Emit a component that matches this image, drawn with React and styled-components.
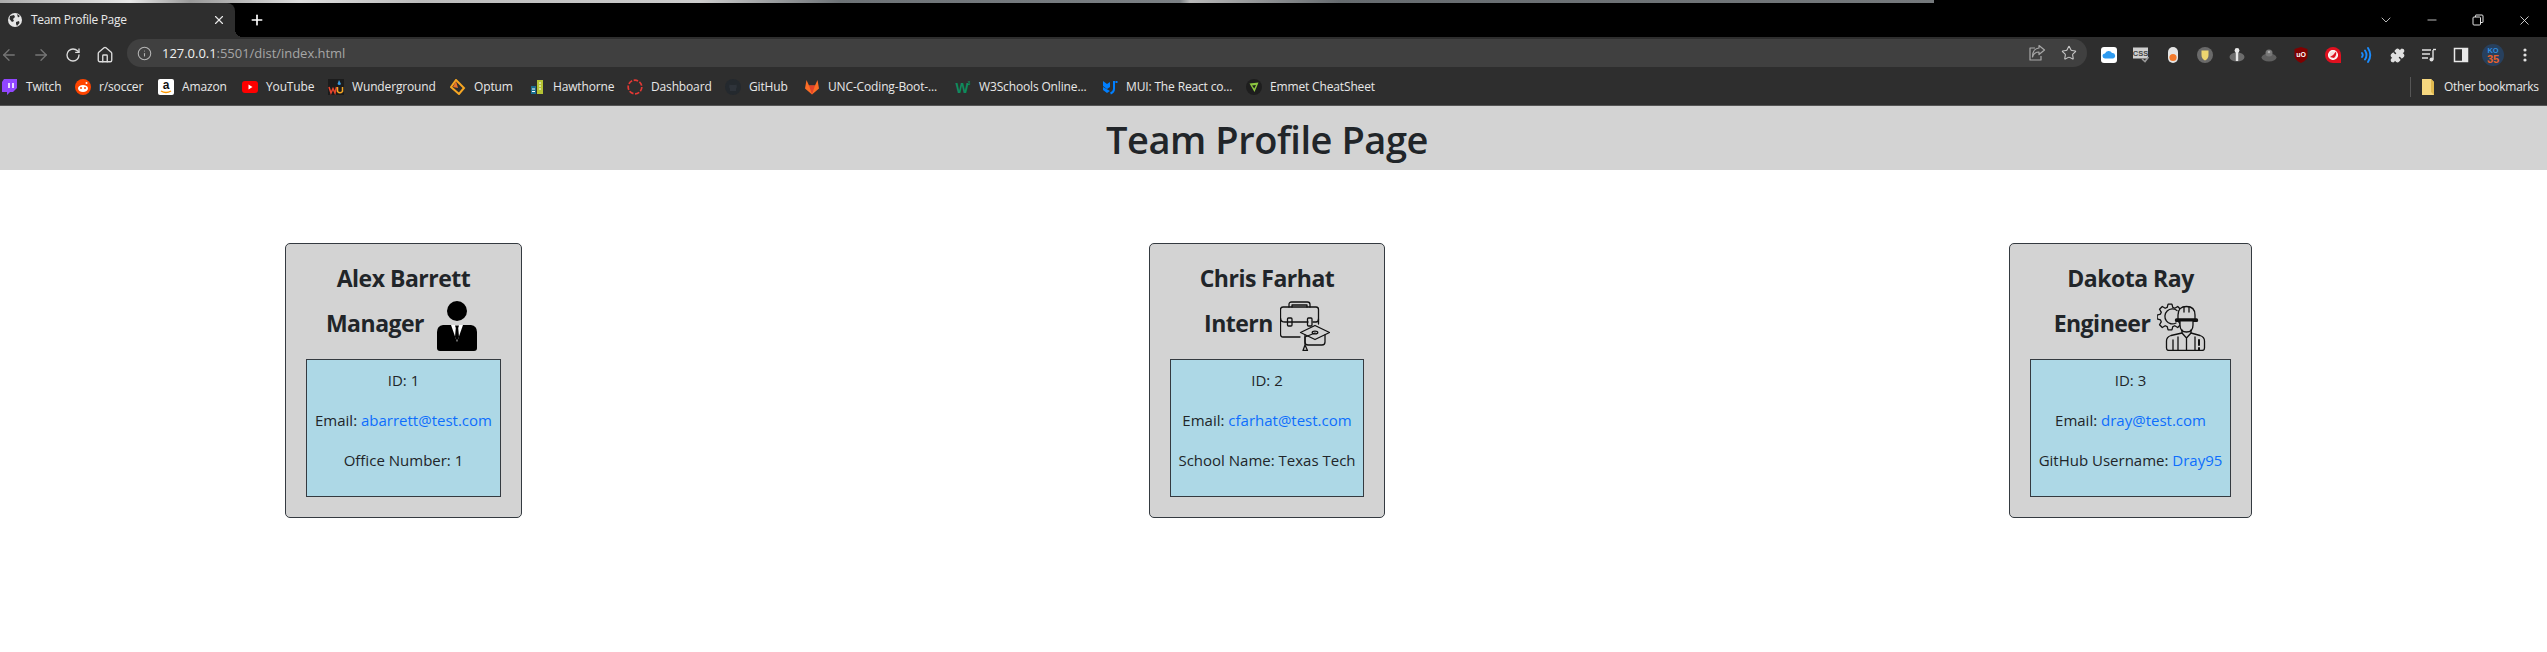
import React from "react";
import styled, { createGlobalStyle } from "styled-components";
import { ArrowLeft, ArrowRight, RotateCw, House, Info, Star, Puzzle, X, Plus, Minus, ChevronDown } from "lucide-react";

const UI = `"Open Sans", "Noto Sans", "Liberation Sans", sans-serif`;

const Global = createGlobalStyle`
  html, body { margin: 0; padding: 0; background: #fff; }
  body { font-family: ${UI}; font-size: 16px; line-height: 24px; color: #212529; overflow: hidden; }
  * { box-sizing: border-box; }
`;

const Page = styled.div`width: 2547px; height: 652px; overflow: hidden; display: flex; flex-direction: column;`;
const WallpaperStrip = styled.div`
  height: 3px; flex: none;
  background: linear-gradient(90deg, #aaa 0, #e8e8e8 130px, #999 190px, #ddd 300px, #bbb 420px, #ccc 700px, #6d7276 840px, #7b8084 1180px, #b8b8b8 1190px, #666b6f 1340px, #75797c 1934px, #000 1934px);
`;
const TabBar = styled.div`height: 34px; flex: none; background: #000; display: flex; align-items: center;`;
const Tab = styled.div`
  position: relative; width: 235px; height: 34px; flex: none; background: #2e2e2e;
  border-top-right-radius: 8px; display: flex; align-items: center; padding: 0 9px 0 8px; color: #e9e9e9; font-size: 12px;
  &::after {
    content: ""; position: absolute; right: -8px; bottom: 0; width: 8px; height: 8px;
    background: radial-gradient(circle at 100% 0, transparent 8px, #2e2e2e 8px);
  }
`;
const TabTitle = styled.span`margin-left: 9px; flex: 1; white-space: nowrap; letter-spacing: -0.3px;`;
const NewTab = styled.div`margin-left: 14px; color: #fff; display: flex;`;
const WindowControls = styled.div`margin-left: auto; display: flex; color: #e4e4e4;`;
const WinButton = styled.div`width: 46px; height: 28px; display: flex; align-items: center; justify-content: center;`;

const Toolbar = styled.div`height: 36px; flex: none; background: #2e2e2e; display: flex; align-items: center; padding: 0 13px 0 0;`;
const IconGroup = styled.div`display: flex; align-items: center; gap: 14px; flex: none;`;
const Slot = styled.div`width: 18px; height: 18px; display: flex; align-items: center; justify-content: center; color: ${p => p.$color || "#dcdcdc"}; flex: none;`;
const Omnibox = styled.div`
  flex: 1; margin: -4px 13px 0; height: 28px; border-radius: 14px; background: #404040;
  display: flex; align-items: center; padding: 0 9px 0 8px; gap: 9px;
`;
const Url = styled.div`flex: 1; font-size: 13px; color: #f0f0f0; white-space: nowrap; letter-spacing: -0.03px;`;
const UrlRest = styled.span`color: #a6a6a6;`;

const BookmarkBar = styled.div`height: 32px; flex: none; background: #2e2e2e; display: flex; align-items: center; padding: 0 11px 4px 2px;`;
const Bookmark = styled.div`display: flex; align-items: center; gap: 8px; margin-right: 17px; flex: none; font-size: 12px; color: #e8e8e8;`;
const BookmarkLabel = styled.span`display: block; width: ${p => p.$w}px; white-space: nowrap; letter-spacing: -0.15px;`;
const OtherBookmarks = styled.div`margin-left: auto; display: flex; align-items: center; font-size: 12px; color: #e8e8e8;`;
const Divider = styled.div`width: 1px; height: 20px; background: #565656; margin-right: 11px;`;
const FolderLabel = styled.span`margin-left: 10px; width: 92px; white-space: nowrap; letter-spacing: -0.25px;`;
const ChromeEdge = styled.div`height: 1px; flex: none; background: #555;`;

const Banner = styled.header`height: 64px; flex: none; background: #d3d3d3; padding-right: 13px; text-align: center;`;
const Title = styled.h1`margin: 0; font-size: 38px; line-height: 66px; font-weight: 600; letter-spacing: -0.45px; color: #212529;`;

const CardRow = styled.main`display: grid; grid-template-columns: 864px 860px 243px; align-items: start; padding: 73px 0 0 285px;`;
const Card = styled.section`
  width: ${p => p.$w}px; height: 275px; background: #d3d3d3; border: 1px solid #343a40; border-radius: 5px;
  padding: 20px; text-align: center;
`;
const Name = styled.h3`margin: 0 0 8px; font-size: 23px; line-height: 29px; font-weight: 700; letter-spacing: -0.5px; color: #212529; white-space: nowrap;`;
const RoleRow = styled.div`display: flex; justify-content: center; align-items: center; gap: 7px; height: 50px; margin-bottom: 8px;`;
const Role = styled.h3`margin: 0 0 5px; font-size: 23px; line-height: 29px; font-weight: 700; letter-spacing: -0.5px; color: #212529; white-space: nowrap;`;
const InfoBox = styled.div`background: #add8e6; border: 1px solid #343a40; padding: 8px 0; height: 138px;`;
const InfoLine = styled.p`margin: 0 0 16px; font-size: 15px; line-height: 24px; white-space: nowrap; color: #212529;`;
const Link = styled.a`color: #0d6efd; text-decoration: none;`;

const gearPath = (() => {
  const cx = 13, cy = 16, teeth = 8, R = 13, r = 10;
  const pts = [];
  for (let i = 0; i < teeth; i++) {
    const a = (i / teeth) * Math.PI * 2;
    const w = Math.PI / teeth;
    [[r, -w * 0.72], [R, -w * 0.38], [R, w * 0.38], [r, w * 0.72]].forEach(([rad, d]) => {
      pts.push(`${(cx + rad * Math.cos(a + d)).toFixed(2)} ${(cy + rad * Math.sin(a + d)).toFixed(2)}`);
    });
  }
  return "M" + pts.join("L") + "Z";
})();

const ManagerIcon = () => (
  <svg width="50" height="50" viewBox="0 0 50 50">
    <circle cx="26" cy="10" r="10" fill="#000" />
    <path d="M12 24 L40 24 Q46 25 46 31 L46 47 Q46 50 43 50 L9 50 Q6 50 6 47 L6 31 Q6 25 12 24Z" fill="#000" />
    <path d="M20 24 L32 24 L26 41Z" fill="#fff" />
    <path d="M24 24.5 L28 24.5 L27.2 27 L28 36 L26 40 L24 36 L24.8 27Z" fill="#000" />
  </svg>
);

const InternIcon = () => (
  <svg width="50" height="50" viewBox="0 0 50 50" fill="none" stroke="#111" strokeWidth="1.3" strokeLinecap="round" strokeLinejoin="round">
    <path d="M9 6 V3.5 Q9 1 11.5 1 H27.5 Q30 1 30 3.5 V6 M12 6 V4 H27 V6" />
    <path d="M20 36 H3 Q0.5 36 0.5 33 V8.5 Q0.5 6 3 6 H36 Q38.5 6 38.5 8.5 V23" />
    <path d="M0.5 17 Q0.5 21 5 21 H28 M33 21 H36 Q38.5 21 38.5 18" />
    <rect x="7.5" y="17" width="4.5" height="8" rx="1" />
    <rect x="27.5" y="17" width="4.5" height="8" rx="1" />
    <path d="M35 24.5 L49.5 31.5 L35 38.5 L20.5 31.5Z" fill="#d3d3d3" />
    <ellipse cx="35" cy="31.5" rx="2.8" ry="1.4" />
    <path d="M25 34 V41 Q25 44 28 44 H42 Q45 44 45 41 V34" />
    <path d="M35 32 L25 36 V44 M25 44 L23 49.5 H27.5Z" />
  </svg>
);

const EngineerIcon = () => (
  <svg width="50" height="50" viewBox="0 0 50 50" fill="none" stroke="#111" strokeWidth="1.3" strokeLinecap="round" strokeLinejoin="round">
    <path d={gearPath} />
    <path d="M20 9.5 A7.5 7.5 0 1 0 19 22" />
    <path d="M21 18 V14 Q21 5.5 29.5 5.5 Q38 5.5 38 14 V18" fill="#d3d3d3" />
    <path d="M27 6 V11 M32 6 V11" />
    <rect x="18.5" y="18" width="22" height="2.4" rx="1" fill="#111" />
    <path d="M23 20.5 V24 Q23 31 29.5 31 Q36 31 36 24 V20.5" fill="#d3d3d3" />
    <path d="M25 29 V32 L29.5 37 L34 32 V29 M29.5 37 V49" />
    <path d="M25 32 L14 34.5 Q9.5 36 9.5 40 V47 Q9.5 49.5 12 49.5 H45 Q47.5 49.5 47.5 47 V40 Q47.5 36 43 34.5 L34 32" />
    <path d="M16 39 V49 M21 36 V49 M38 36 V49" />
    <path d="M42 39 V44 M42 47 V49" strokeWidth="2" />
  </svg>
);

const Globe = () => (
  <svg width="14" height="14" viewBox="0 0 14 14">
    <circle cx="7" cy="7" r="7" fill="#e6e6e6" />
    <path d="M2 3 L6 2 L7 4 L5 6 L6 8 L4 9 L1.5 6Z M8 9 L11 8 L11.5 10 L9 13 L8 11Z M9 1 L12 3 L10 4.5Z" fill="#2e2e2e" />
  </svg>
);

const Restore = () => (
  <svg width="12" height="12" viewBox="0 0 12 12" fill="none" stroke="#e4e4e4" strokeWidth="1">
    <rect x="1" y="3" width="7.5" height="8" rx="1" />
    <path d="M3.5 3 V1.5 Q3.5 1 4 1 H10 Q11 1 11 2 V8 Q11 8.5 10.5 8.5 H8.5" />
  </svg>
);

const FI = ({ children }) => <svg width="16" height="16" viewBox="0 0 16 16" style={{ flex: "none" }}>{children}</svg>;

const favicons = {
  twitch: <FI><path d="M2 0 H15 V9 L11 13 H8 L5 16 V13 H0 V3Z" fill="#9146ff" /><path d="M7 4 V9 M11 4 V9" stroke="#fff" strokeWidth="1.6" /></FI>,
  reddit: <FI><circle cx="8" cy="8" r="8" fill="#ff4500" /><ellipse cx="8" cy="9.5" rx="5" ry="3.4" fill="#fff" /><circle cx="6" cy="9" r="1" fill="#ff4500" /><circle cx="10" cy="9" r="1" fill="#ff4500" /><circle cx="11.5" cy="4" r="1" fill="#fff" /></FI>,
  amazon: <FI><rect width="16" height="16" rx="2" fill="#fff" /><text x="8" y="10" textAnchor="middle" fontSize="12" fontWeight="700" fontFamily="Liberation Sans" fill="#111">a</text><path d="M3 12 Q8 15 13 12" stroke="#f90" strokeWidth="1.4" fill="none" /></FI>,
  youtube: <FI><rect y="2" width="16" height="12" rx="3" fill="#f00" /><path d="M6.5 5.5 L10.5 8 L6.5 10.5Z" fill="#fff" /></FI>,
  wu: <FI><rect width="16" height="16" fill="#1c1c1c" /><path d="M11 1 L13 5 A2 2 0 0 1 9.5 5Z" fill="#3a9be0" /><path d="M1 8 L3 14 L5 9.5 L7 14 L8.5 8" stroke="#e8452c" strokeWidth="1.5" fill="none" /><path d="M9.5 8 V12.5 Q12 15 14.5 12.5 V8" stroke="#f5a623" strokeWidth="1.5" fill="none" /></FI>,
  optum: <FI><path d="M6 1 L14 9 L9 15 L1 8Z" fill="none" stroke="#f6a623" strokeWidth="2" /><path d="M6 2 L3 8 L8 9Z" fill="#e8702a" /></FI>,
  hawthorne: <FI><rect x="8" y="1" width="6" height="14" fill="#b5c334" /><rect x="2" y="7" width="5" height="8" fill="#1a6f8f" /><path d="M10 4 H12 M10 7 H12 M10 10 H12 M3 10 H6 M3 12.5 H6" stroke="#fff" strokeWidth="1" /></FI>,
  dashboard: <FI><circle cx="8" cy="8" r="6.8" fill="none" stroke="#e53935" strokeWidth="1.7" strokeDasharray="4.5 1.6" /></FI>,
  github: <FI><circle cx="8" cy="8" r="8" fill="#24292e" /><path d="M5 12 V10 Q3.5 8 4.5 5.5 L6 6 H10 L11.5 5.5 Q12.5 8 11 10 V12Z" fill="#2e333a" /></FI>,
  gitlab: <FI><path d="M8 15.5 L1 9.5 L2.5 1 L5 6.5 H11 L13.5 1 L15 9.5Z" fill="#fc6d26" /><path d="M8 15.5 L5 6.5 H11Z" fill="#e24329" /></FI>,
  w3: <FI><text x="7" y="14" textAnchor="middle" fontSize="14" fontWeight="700" fontFamily="Liberation Sans" fill="#04aa6d" opacity=".75">W</text><text x="14" y="6" textAnchor="middle" fontSize="5" fontFamily="Liberation Sans" fill="#04aa6d">3</text></FI>,
  mui: <FI><path d="M1 2 L5 5 L8 3 V8 L5 10 L1 7Z M1 8 V11 L5 14 L8 12" fill="#007fff" /><path d="M12 2 V10 Q12 13 8.5 14.5 M14.5 2 V4" stroke="#007fff" strokeWidth="2" fill="none" /></FI>,
  emmet: <FI><circle cx="8" cy="8" r="8" fill="#1e1e1e" /><path d="M3.5 4.5 L12.5 3.5 L8.5 13Z M6 6.5 L10 6 L8.3 9.5Z" fill="#8cc63f" fillRule="evenodd" /></FI>,
};

const bookmarks = [
  ["twitch", "Twitch", 32], ["reddit", "r/soccer", 42], ["amazon", "Amazon", 43], ["youtube", "YouTube", 45],
  ["wu", "Wunderground", 81], ["optum", "Optum", 38], ["hawthorne", "Hawthorne", 57], ["dashboard", "Dashboard", 57],
  ["github", "GitHub", 38], ["gitlab", "UNC-Coding-Boot-...", 110], ["w3", "W3Schools Online...", 106],
  ["mui", "MUI: The React co...", 103], ["emmet", "Emmet CheatSheet", 101],
];

const extensions = [
  <FI><rect width="16" height="16" rx="3" fill="#fff" /><path d="M4 11.5 A2.5 2.5 0 0 1 4 6.5 A3.8 3.8 0 0 1 11 6 A2.8 2.8 0 0 1 12 11.5Z" fill="#2f9bf0" /></FI>,
  <FI><rect y="0.5" width="15" height="11" fill="#cfcfcf" /><text x="7.5" y="9" textAnchor="middle" fontSize="7.5" fontWeight="700" fontFamily="Liberation Sans" fill="#444">CSS</text><path d="M9 12 L12 14.5 L15.5 10" stroke="#999" strokeWidth="1.6" fill="none" /></FI>,
  <FI><rect x="3" y="0" width="10" height="16" rx="5" fill="#e5e5e5" /><circle cx="8" cy="10.5" r="3.6" fill="#f47a2b" /></FI>,
  <FI><circle cx="8" cy="8" r="8" fill="#6a6a6a" /><path d="M4.5 3.5 H11.5 V8 Q11.5 11.5 8 13.5 Q4.5 11.5 4.5 8Z" fill="#ecd56f" /></FI>,
  <FI><ellipse cx="8" cy="10" rx="7.5" ry="4.5" fill="#6c6c6c" /><rect x="6.8" y="3" width="2.4" height="11" fill="#e8e8e8" /><circle cx="8" cy="3.5" r="2.4" fill="#e8e8e8" /></FI>,
  <FI><ellipse cx="8" cy="10.5" rx="7.5" ry="4" fill="#5f5f5f" /><circle cx="8" cy="6" r="3.5" fill="#777" /><circle cx="8" cy="5" r="1.3" fill="#aaa" /></FI>,
  <FI><path d="M8 0 L14.5 2 V9 Q14.5 13 8 16 Q1.5 13 1.5 9 V2Z" fill="#800000" /><text x="8" y="10" textAnchor="middle" fontSize="7" fontWeight="700" fontFamily="Liberation Sans" fill="#fff">uO</text></FI>,
  <FI><path d="M8 0 A8 8 0 0 1 16 8 V16 H8 A8 8 0 0 1 8 0Z" fill="#e0101f" /><circle cx="8" cy="8" r="4.4" fill="#f7dede" stroke="#fff" strokeWidth="1.3" /><path d="M5 10 Q8 9 11 4.5 Q12 8 9 11Z" fill="#e0101f" /></FI>,
  <FI><path d="M5 6 Q6.5 8 5 10 M8 3.5 Q11 8 8 12.5 M11 1 Q15.5 8 11 15" stroke="#1a8cff" strokeWidth="1.9" fill="none" strokeLinecap="round" /></FI>,
];

const Music = () => (
  <FI><path d="M1 3 H10 M1 7 H9 M1 11 H7" stroke="#e0e0e0" strokeWidth="1.4" /><path d="M12 3 V12.5" stroke="#e0e0e0" strokeWidth="1.4" /><circle cx="10.5" cy="12.5" r="2" fill="#e0e0e0" /><path d="M12 2.5 H15" stroke="#e0e0e0" strokeWidth="1.4" /></FI>
);
const SidePanel = () => (
  <FI><rect x="1.5" y="1.5" width="13" height="13" fill="none" stroke="#e8e8e8" strokeWidth="1.5" /><rect x="9" y="1.5" width="5.5" height="13" fill="#e8e8e8" /></FI>
);
const Avatar = () => (
  <svg width="22" height="22" viewBox="0 0 22 22" style={{ flex: "none" }}>
    <circle cx="11" cy="11" r="11" fill="#27405e" />
    <text x="11" y="9" textAnchor="middle" fontSize="7.5" fontWeight="700" fontFamily="Liberation Sans" fill="#2f8fe0">KO</text>
    <text x="11" y="19" textAnchor="middle" fontSize="11" fontWeight="700" fontFamily="Liberation Sans" fill="#e8622a">35</text>
  </svg>
);
const Dots = () => (
  <FI><circle cx="8" cy="3" r="1.6" fill="#e0e0e0" /><circle cx="8" cy="8" r="1.6" fill="#e0e0e0" /><circle cx="8" cy="13" r="1.6" fill="#e0e0e0" /></FI>
);
const ShareIcon = () => (
  <svg width="18" height="18" viewBox="0 0 18 18" fill="none" stroke="#a8a8a8" strokeWidth="1.2" strokeLinejoin="round">
    <path d="M7 4 H2 V16 H13 V12" />
    <path d="M11 1.5 L16.5 6 L11 10.5 V8 Q6 8 4.5 13 Q4.5 4.5 11 4Z" />
  </svg>
);
const Folder = () => (
  <svg width="12" height="16" viewBox="0 0 12 16" style={{ flex: "none" }}>
    <path d="M0 0 H9 L12 3 V16 H0Z" fill="#f6d77f" />
    <path d="M9 0 V13 L12 16 V3Z" fill="#e0b94f" />
  </svg>
);

const people = [
  { w: 237, name: "Alex Barrett", role: "Manager", Icon: ManagerIcon, id: 1, email: "abarrett@test.com", extra: <InfoLine>Office Number: 1</InfoLine> },
  { w: 236, name: "Chris Farhat", role: "Intern", Icon: InternIcon, id: 2, email: "cfarhat@test.com", extra: <InfoLine>School Name: Texas Tech</InfoLine> },
  { w: 243, name: "Dakota Ray", role: "Engineer", Icon: EngineerIcon, id: 3, email: "dray@test.com", extra: <InfoLine>GitHub Username: <Link href="#">Dray95</Link></InfoLine> },
];

export default function App() {
  return (
    <Page>
      <Global />
      <WallpaperStrip />
      <TabBar>
        <Tab>
          <Globe />
          <TabTitle>Team Profile Page</TabTitle>
          <X size={14} color="#e8e8e8" />
        </Tab>
        <NewTab><Plus size={16} strokeWidth={2.5} /></NewTab>
        <WindowControls>
          <WinButton><ChevronDown size={16} strokeWidth={1.2} /></WinButton>
          <WinButton><Minus size={14} strokeWidth={1.4} /></WinButton>
          <WinButton><Restore /></WinButton>
          <WinButton><X size={15} strokeWidth={1.4} /></WinButton>
        </WindowControls>
      </TabBar>
      <Toolbar>
        <IconGroup>
          <Slot $color="#767676"><ArrowLeft size={18} strokeWidth={1.7} /></Slot>
          <Slot $color="#767676"><ArrowRight size={18} strokeWidth={1.7} /></Slot>
          <Slot><RotateCw size={16} strokeWidth={2} /></Slot>
          <Slot><House size={18} strokeWidth={1.8} /></Slot>
        </IconGroup>
        <Omnibox>
          <Slot $color="#b5b5b5"><Info size={15} strokeWidth={1.7} /></Slot>
          <Url>127.0.0.1<UrlRest>:5501/dist/index.html</UrlRest></Url>
          <IconGroup>
            <Slot><ShareIcon /></Slot>
            <Slot $color="#c8c8c8"><Star size={16} strokeWidth={1.6} /></Slot>
          </IconGroup>
        </Omnibox>
        <IconGroup>
          {extensions.map((e, i) => <Slot key={i}>{e}</Slot>)}
          <Slot $color="#e0e0e0"><Puzzle size={15} strokeWidth={2} fill="#e0e0e0" /></Slot>
          <Slot><Music /></Slot>
          <Slot><SidePanel /></Slot>
          <Slot><Avatar /></Slot>
          <Slot><Dots /></Slot>
        </IconGroup>
      </Toolbar>
      <BookmarkBar>
        {bookmarks.map(([icon, label, w]) => (
          <Bookmark key={label}>
            {favicons[icon]}
            <BookmarkLabel $w={w}>{label}</BookmarkLabel>
          </Bookmark>
        ))}
        <OtherBookmarks>
          <Divider />
          <Folder />
          <FolderLabel>Other bookmarks</FolderLabel>
        </OtherBookmarks>
      </BookmarkBar>
      <ChromeEdge />
      <Banner><Title>Team Profile Page</Title></Banner>
      <CardRow>
        {people.map(({ w, name, role, Icon, id, email, extra }) => (
          <Card key={id} $w={w}>
            <Name>{name}</Name>
            <RoleRow><Role>{role}</Role><Icon /></RoleRow>
            <InfoBox>
              <InfoLine>ID: {id}</InfoLine>
              <InfoLine>Email: <Link href="#">{email}</Link></InfoLine>
              {extra}
            </InfoBox>
          </Card>
        ))}
      </CardRow>
    </Page>
  );
}
